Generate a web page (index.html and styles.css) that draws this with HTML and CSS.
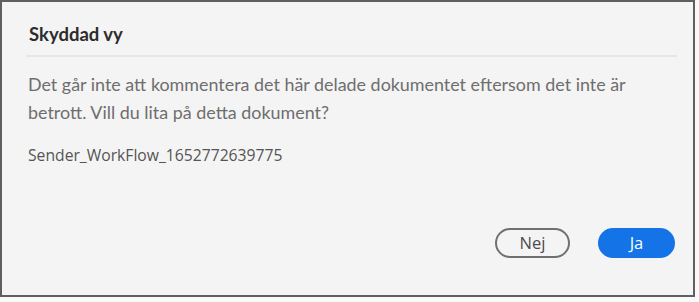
FILE: index.html
```html
<!DOCTYPE html>
<html lang="sv">
<head>
<meta charset="utf-8">
<title>Skyddad vy</title>
<link rel="stylesheet" href="styles.css">
</head>
<body>
<div class="dialog">
  <h1 class="title">Skyddad vy</h1>
  <div class="divider"></div>
  <p class="message">Det går inte att kommentera det här delade dokumentet eftersom det inte är betrott. Vill du lita på detta dokument?</p>
  <p class="filename">Sender_WorkFlow_1652772639775</p>
  <div class="actions">
    <button class="btn btn-secondary">Nej</button>
    <button class="btn btn-primary">Ja</button>
  </div>
</div>
</body>
</html>
```

FILE: styles.css
```css
html, body {
  margin: 0;
  padding: 0;
  background: #fafafa;
}

.dialog {
  box-sizing: border-box;
  width: 695px;
  height: 297px;
  border: 2px solid #5f5f5f;
  background: #f4f4f4;
  display: flex;
  flex-direction: column;
  padding: 0 16px 0 24px;
}

.title {
  margin: 0;
  padding: 20px 0 0 3px;
  font-family: Lato, "Noto Sans", sans-serif;
  font-weight: 700;
  font-size: 18.5px;
  line-height: 24px;
  color: #2c2c2c;
  height: 33px;
}

.divider {
  height: 2px;
  background: #e6e6e6;
}

.message {
  margin: 13px 0 0 2px;
  font-family: Lato, "Noto Sans", sans-serif;
  font-size: 17.9px;
  line-height: 28px;
  color: #6e6e6e;
  max-width: 640px;
}

.filename {
  margin: 19px 0 0 2px;
  font-family: "Open Sans", "Noto Sans", sans-serif;
  font-size: 15.7px;
  line-height: 20px;
  color: #555555;
}

.actions {
  margin-top: auto;
  margin-bottom: 37px;
  display: flex;
  justify-content: flex-end;
  gap: 28px;
  padding-right: 2px;
}

.btn {
  box-sizing: border-box;
  height: 30px;
  border-radius: 15px;
  font-family: "Open Sans", "Noto Sans", sans-serif;
  font-size: 16.5px;
  line-height: 26px;
  padding: 0;
  cursor: pointer;
}

.btn-secondary {
  width: 75px;
  background: transparent;
  border: 2px solid #707070;
  color: #4b4b4b;
}

.btn-primary {
  width: 77px;
  background: #1473e6;
  border: none;
  color: #ffffff;
}
```
